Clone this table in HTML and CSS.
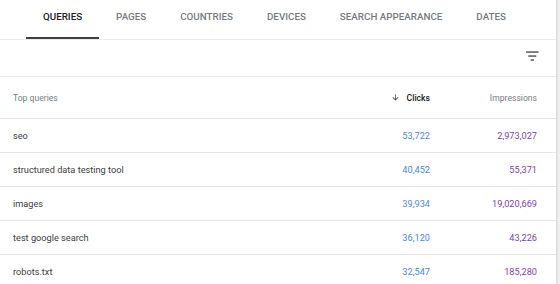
FILE: index.html
```html
<!DOCTYPE html>
<html lang="en">
<head>
<meta charset="utf-8">
<title>Queries</title>
<link rel="stylesheet" href="styles.css">
</head>
<body>
<div class="card">
  <nav class="tabs">
    <div class="tab active">Queries</div>
    <div class="tab">Pages</div>
    <div class="tab">Countries</div>
    <div class="tab">Devices</div>
    <div class="tab">Search appearance</div>
    <div class="tab">Dates</div>
  </nav>
  <div class="toolbar">
    <svg class="filter" width="13" height="10" viewBox="0 0 13 10" aria-hidden="true">
      <rect x="0" y="0.4" width="12.6" height="1.3" fill="#3c4043"/>
      <rect x="2.3" y="4.4" width="8" height="1.3" fill="#3c4043"/>
      <rect x="4.6" y="8.4" width="3.4" height="1.3" fill="#3c4043"/>
    </svg>
  </div>
  <div class="table">
    <div class="row head">
      <div class="c-q">Top queries</div>
      <div class="c-n sorted">
        <svg class="arrow" width="9" height="9" viewBox="0 0 24 24" aria-hidden="true"><path d="M20 12l-1.41-1.41L13 16.17V4h-2v12.17l-5.58-5.59L4 12l8 8 8-8z" fill="#3c4043"/></svg>
        <span>Clicks</span>
      </div>
      <div class="c-n">Impressions</div>
    </div>
    <div class="row">
      <div class="c-q">seo</div>
      <div class="c-n clicks">53,722</div>
      <div class="c-n impr">2,973,027</div>
    </div>
    <div class="row">
      <div class="c-q">structured data testing tool</div>
      <div class="c-n clicks">40,452</div>
      <div class="c-n impr">55,371</div>
    </div>
    <div class="row">
      <div class="c-q">images</div>
      <div class="c-n clicks">39,934</div>
      <div class="c-n impr">19,020,669</div>
    </div>
    <div class="row">
      <div class="c-q">test google search</div>
      <div class="c-n clicks">36,120</div>
      <div class="c-n impr">43,226</div>
    </div>
    <div class="row">
      <div class="c-q">robots.txt</div>
      <div class="c-n clicks">32,547</div>
      <div class="c-n impr">185,280</div>
    </div>
  </div>
</div>
</body>
</html>
```
FILE: styles.css
```css
html, body {
  margin: 0;
  padding: 0;
  background: #eef0f1;
  height: 284px;
  overflow: hidden;
}
body {
  font-family: Roboto, "Liberation Sans", Arial, sans-serif;
  color: #3c4043;
}
.card {
  width: 556px;
  height: 284px;
  background: #fff;
  box-shadow: 1px 0 2px rgba(0,0,0,0.12);
}
.tabs {
  display: flex;
  height: 39px;
  padding-left: 26px;
  border-bottom: 1px solid #ebebeb;
}
.tab {
  position: relative;
  padding: 0 17px;
  line-height: 34px;
  height: 39px;
  font-size: 9.8px;
  font-weight: 500;
  text-transform: uppercase;
  letter-spacing: 0;
  color: #777b80;
  white-space: nowrap;
}
.tab.active {
  color: #202124;
}
.tab.active::after {
  content: "";
  position: absolute;
  left: 0;
  right: 0;
  bottom: 0;
  height: 2px;
  background: #3c4043;
}
.toolbar {
  height: 36px;
  display: flex;
  justify-content: flex-end;
  align-items: flex-start;
  padding-right: 17px;
  border-bottom: 1px solid #ebebeb;
}
.filter {
  margin-top: 11px;
}
.row {
  display: grid;
  grid-template-columns: 1fr 100px 107px;
  align-items: center;
  height: 33px;
  padding: 0 19px 0 13px;
  border-bottom: 1px solid #e6e6e6;
  font-size: 9.2px;
  color: #3c4043;
}
.row.head {
  height: 41px;
  font-size: 8.6px;
  color: #777b80;
}
.c-n {
  text-align: right;
}
.sorted {
  display: flex;
  justify-content: flex-end;
  align-items: center;
  gap: 7px;
  color: #202124;
  font-weight: 500;
}
.arrow {
  display: block;
}
.clicks {
  color: #4a86e8;
}
.impr {
  color: #7b3fb8;
}
```
